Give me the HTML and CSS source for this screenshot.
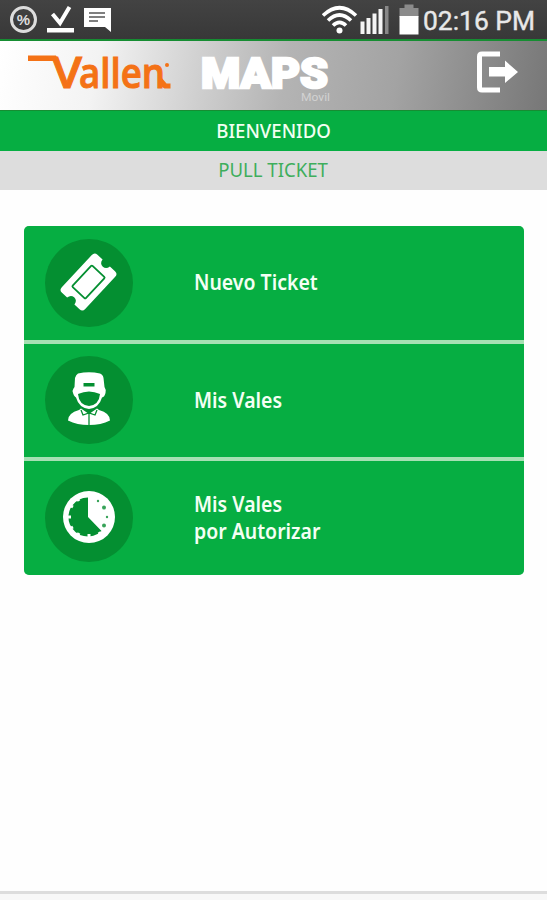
FILE: index.html
```html
<!DOCTYPE html>
<html lang="es">
<head>
  <meta charset="UTF-8">
  <meta name="viewport" content="width=device-width, initial-scale=1">
  <title>Vallen MAPS</title>
  <link rel="stylesheet" href="styles.css">
</head>
<body>

  <div class="status-bar">
    <svg class="status-left" width="112" height="39" viewBox="0 0 112 39">
      <circle cx="23.5" cy="19.5" r="12" fill="none" stroke="#ddd" stroke-width="3"/>
      <text x="23.5" y="25" class="percent" text-anchor="middle">%</text>
      <path d="M52.500 14l7.500 9 9.500-16" fill="none" stroke="#fff" stroke-width="4"/>
      <path d="M47 28h27v4.500H47z" fill="#fff"/>
      <path d="M84 8h27v24l-6-5H84z" fill="#fff"/>
      <path d="M89 13h16M89 17h16M89 21h9" stroke="#555" stroke-width="1.600"/>
    </svg>
    <svg class="status-right" width="98" height="39" viewBox="0 0 98 39">
      <g fill="none" stroke="#fff" stroke-width="3.600">
        <path d="M1 15.500Q17.500 0 34 15.500"/>
        <path d="M6 20.500Q17.500 9.500 29 20.500"/>
        <path d="M11 25.500Q17.500 19 24 25.500"/>
      </g>
      <circle cx="17.500" cy="30.500" r="3" fill="#fff"/>
      <path d="M38.500 21.500h4V34h-4zM44.500 18h4v16h-4zM50.500 13.500h4V34h-4zM56.500 9h4v25h-4z" fill="#f4f4f4"/>
      <path d="M63 6h3.500v28H63z" fill="#888"/>
      <path d="M77.500 17V8h5V4.500h9V8h5v9z" fill="#8b8b8b"/>
      <path d="M77.500 16h19v18.500h-19z" fill="#fff"/>
    </svg>
    <svg class="clock" width="125" height="39" viewBox="0 0 125 39">
      <text x="3" y="29.500" textLength="112" lengthAdjust="spacingAndGlyphs">02:16 PM</text>
    </svg>
  </div>

  <header class="header">
    <svg class="logo" width="180" height="69" viewBox="0 0 180 69">
      <path d="M28 14.500h28l3 5.500H28z" fill="#f47216"/>
      <text x="52" y="47" class="logo-v" textLength="30" lengthAdjust="spacingAndGlyphs">V</text>
      <text x="79" y="47" class="logo-rest" textLength="86" lengthAdjust="spacingAndGlyphs">allen</text>
      <path d="M161 36l5.500 6.500h4v5h-6Q161 46 161 42z" fill="#f47216"/>
      <circle cx="167" cy="24" r="2" fill="#f47216"/>
    </svg>
    <svg class="maps" width="160" height="69" viewBox="0 0 160 69">
      <text x="21" y="47" class="maps-title" textLength="127" lengthAdjust="spacingAndGlyphs">MAPS</text>
      <text x="121" y="60" class="maps-sub" textLength="29" lengthAdjust="spacingAndGlyphs">Movil</text>
    </svg>
    <svg class="logout" width="42" height="42" viewBox="0 0 42 42">
      <path d="M24 3H6Q3.500 3 3.500 5.500V36.500Q3.500 39 6 39H24" fill="none" stroke="#fff" stroke-width="5"/>
      <path d="M13 16h16v-6.500L42 21 29 32v-6.500H13z" fill="#fff"/>
    </svg>
  </header>

  <div class="welcome"><span>BIENVENIDO</span></div>
  <div class="subtitle"><span>PULL TICKET</span></div>

  <main class="menu">
    <a class="menu-item">
      <span class="icon">
        <svg width="88" height="88" viewBox="0 0 88 88">
          <g transform="translate(43.500 43) rotate(-47)">
            <path d="M-22-16H22Q26-16 26-12V-5Q21-4.500 21 0T26 5V12Q26 16 22 16H-22Q-26 16-26 12V5Q-21 4.500-21 0T-26-5V-12Q-26-16-22-16Z" fill="#fff"/>
            <rect x="-14.500" y="-9" width="29" height="18" rx="1" fill="none" stroke="#048f31" stroke-width="1.800"/>
          </g>
        </svg>
      </span>
      <span class="label">Nuevo Ticket</span>
    </a>
    <a class="menu-item">
      <span class="icon">
        <svg width="88" height="88" viewBox="0 0 88 88">
          <path d="M33 17.500Q44 15 55 17.500Q58 18.500 58.500 22L59.500 31Q61.500 34 60.500 37Q59.500 41 57 41.500Q54 52 44 53Q34 52 31 41.500Q28.500 40 27.500 35Q28.500 32 29.500 31L30 22Q31 18.500 33 17.500Z" fill="#fff"/>
          <path d="M33 38Q44 33 55 38Q54 49 44 50Q34 49 33 38Z" fill="#048f31"/>
          <path d="M38.500 27h11v3.500h-11z" fill="#048f31"/>
          <path d="M36 52.500L34 54Q23 57 23 64.500Q32 69 44 69T65 64.500Q65 57 54 54L52 52.500 44 58Z" fill="#fff"/>
          <path d="M36 54l2 5 6-2 6 2 2-5M44 57v12" fill="none" stroke="#048f31" stroke-width="1.300"/>
        </svg>
      </span>
      <span class="label">Mis Vales</span>
    </a>
    <a class="menu-item">
      <span class="icon">
        <svg width="88" height="88" viewBox="0 0 88 88">
          <circle cx="44" cy="43" r="26" fill="#fff"/>
          <path d="M43 43V23.500A19.500 19.500 0 1 0 56.500 57Z" fill="#048f31"/>
          <path d="M34 27l-2-3M28 33l-4-2M26 43h-4M28 53l-4 2M34 59l-2 4M44 60v4M54 58l2 3" stroke="#fff" stroke-width="3"/>
          <g fill="#38a359">
            <circle cx="53" cy="27" r="1.200"/>
            <circle cx="59" cy="33.500" r="2"/>
            <circle cx="62" cy="43" r="1.200"/>
            <circle cx="59" cy="51.500" r="2"/>
          </g>
        </svg>
      </span>
      <span class="label">Mis Vales<br>por Autorizar</span>
    </a>
  </main>

  <footer class="footer"></footer>

</body>
</html>
```
FILE: styles.css
```css
html, body {
  height: 100%;
  margin: 0;
}

body {
  display: flex;
  flex-direction: column;
  background: #fefefe;
  font-family: "Noto Sans", "Open Sans", sans-serif;
  overflow: hidden;
}

svg {
  display: block;
  flex: none;
}

.status-bar {
  display: flex;
  flex: none;
  height: 39px;
  background: linear-gradient(#434343, #383838);
}

.status-right {
  margin-left: auto;
}

.percent {
  font: bold 15px "Liberation Sans", sans-serif;
  fill: #ddd;
}

.clock {
  margin-right: 2px;
  margin-left: -1px;
}

.status-right {
  margin-right: 1px;
}

.clock text {
  font: 400 26px Roboto, sans-serif;
  fill: #e8e8e8;
  stroke: #e8e8e8;
  stroke-width: 0.4px;
}

.header {
  display: flex;
  flex: none;
  box-sizing: border-box;
  height: 72px;
  border-top: 2px solid #168d32;
  border-bottom: 1px solid #168d32;
  background: linear-gradient(100deg, #fff 0%, #f3f3f3 18%, #cfcfcf 37%, #b4b4b4 52%, #a3a3a3 72%, #777 100%);
}

.logo-v, .logo-rest {
  font-family: "Open Sans", sans-serif;
  font-weight: 600;
  fill: #f47216;
  stroke: #f47216;
}

.logo-v {
  font-size: 44px;
}

.logo-rest {
  font-size: 41px;
}

.maps-title {
  font: 900 43px Roboto, sans-serif;
  fill: #fff;
  stroke: #fff;
  stroke-width: 2.5px;
}

.maps-sub {
  font: 11px Roboto, sans-serif;
  fill: #d2d2d2;
}

.logout {
  margin: 10px 29px 0 auto;
}

.welcome, .subtitle {
  display: flex;
  flex: none;
  align-items: center;
  justify-content: center;
  height: 40px;
  font-size: 20px;
  line-height: 24px;
}

.welcome {
  background: #06ae42;
  color: #f2fff2;
  font-weight: 500;
}

.subtitle {
  height: 39px;
  background: #ddd;
  color: #3fae5c;
}

.welcome span, .subtitle span {
  padding-bottom: 1px;
  transform: scaleX(0.93);
}

.menu {
  display: flex;
  flex: none;
  flex-direction: column;
  gap: 4px;
  margin: 36px 23px 0 24px;
  border-radius: 5px;
  background: #a6e0b3;
  overflow: hidden;
}

.menu-item {
  display: flex;
  align-items: center;
  height: 113.6px;
  padding-left: 21px;
  background: #06ae42;
}

.icon {
  width: 88px;
  height: 88px;
  border-radius: 50%;
  background: #048f31;
}

.label {
  margin-left: 61px;
  padding-bottom: 2px;
  color: #f4fff4;
  font-size: 22px;
  font-weight: 600;
  line-height: 27px;
  transform: scaleX(0.885);
  transform-origin: left;
}

.footer {
  height: 6px;
  margin-top: auto;
  border-top: 3px solid #ddd;
  background: #f8f8f8;
}
```
